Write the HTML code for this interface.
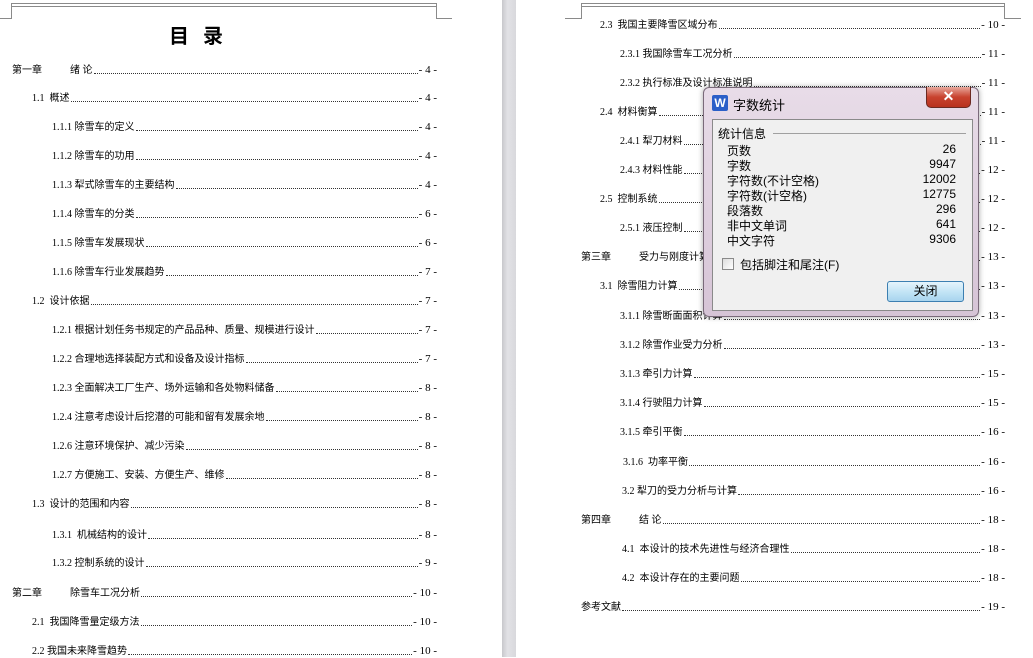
<!DOCTYPE html>
<html><head><meta charset="utf-8">
<style>
*{margin:0;padding:0;box-sizing:border-box}
body{width:1033px;height:657px;overflow:hidden;background:#fff;position:relative;font-family:"Liberation Serif","Noto Sans CJK SC",serif;color:#000}
.gut{position:absolute;left:502px;top:0;width:14px;height:657px;background:linear-gradient(90deg,#c8c8cc,#e2e2e6 40%,#d8d8dc)}
.ln{position:absolute;background:#8a8a8a}
.r{position:absolute;display:flex;align-items:flex-end;font-size:10px;height:13px;line-height:13px;white-space:nowrap}
.r .t{font-family:"Liberation Serif","Noto Sans CJK SC",serif}
.r .d{flex:1;border-bottom:1px dotted #333;margin:0 1px 3px 1px}
.r .p{font-family:"Liberation Serif",serif;font-size:11px}
.sp{display:inline-block}
#dlg{position:absolute;left:703px;top:87px;width:276px;height:230px;border:1px solid #7a6a7a;border-radius:6px;background:linear-gradient(180deg,#e8dce8,#d6c4d6);box-shadow:0 0 6px rgba(0,0,0,.35)}
#dlg .in{position:absolute;left:8px;top:31px;width:261px;height:192px;background:#f0f0f0;border:1px solid #8a8a8a}
#dlg .f{font-family:"Liberation Sans","Noto Sans CJK SC",sans-serif;font-size:12px;position:absolute;white-space:nowrap}
</style></head><body>
<div class="gut"></div>
<div class="ln" style="left:11px;top:3px;width:426px;height:1px"></div>
<div class="ln" style="left:11px;top:6px;width:426px;height:1px"></div>
<div class="ln" style="left:11px;top:3px;width:1px;height:16px"></div>
<div class="ln" style="left:0;top:18px;width:12px;height:1px"></div>
<div class="ln" style="left:436px;top:3px;width:1px;height:16px"></div>
<div class="ln" style="left:436px;top:18px;width:16px;height:1px"></div>
<div class="ln" style="left:581px;top:3px;width:424px;height:1px"></div>
<div class="ln" style="left:581px;top:6px;width:424px;height:1px"></div>
<div class="ln" style="left:581px;top:3px;width:1px;height:16px"></div>
<div class="ln" style="left:565px;top:18px;width:17px;height:1px"></div>
<div class="ln" style="left:1004px;top:3px;width:1px;height:16px"></div>
<div class="ln" style="left:1004px;top:18px;width:17px;height:1px"></div>

<div style="position:absolute;left:169px;top:20px;font-size:20px;font-weight:bold;font-family:'Noto Sans CJK SC',sans-serif;letter-spacing:14px">目录</div>

<div class="r" style="left:12px;width:425px;top:64px"><span class="t">第一章<span class="sp" style="width:28px"></span>绪&nbsp;论</span><span class="d"></span><span class="p">- 4 -</span></div>
<div class="r" style="left:32px;width:405px;top:92px"><span class="t">1.1 &nbsp;概述</span><span class="d"></span><span class="p">- 4 -</span></div>
<div class="r" style="left:52px;width:385px;top:121px"><span class="t">1.1.1 除雪车的定义</span><span class="d"></span><span class="p">- 4 -</span></div>
<div class="r" style="left:52px;width:385px;top:150px"><span class="t">1.1.2 除雪车的功用</span><span class="d"></span><span class="p">- 4 -</span></div>
<div class="r" style="left:52px;width:385px;top:179px"><span class="t">1.1.3 犁式除雪车的主要结构</span><span class="d"></span><span class="p">- 4 -</span></div>
<div class="r" style="left:52px;width:385px;top:208px"><span class="t">1.1.4 除雪车的分类</span><span class="d"></span><span class="p">- 6 -</span></div>
<div class="r" style="left:52px;width:385px;top:237px"><span class="t">1.1.5 除雪车发展现状</span><span class="d"></span><span class="p">- 6 -</span></div>
<div class="r" style="left:52px;width:385px;top:266px"><span class="t">1.1.6 除雪车行业发展趋势</span><span class="d"></span><span class="p">- 7 -</span></div>
<div class="r" style="left:32px;width:405px;top:295px"><span class="t">1.2 &nbsp;设计依据</span><span class="d"></span><span class="p">- 7 -</span></div>
<div class="r" style="left:52px;width:385px;top:324px"><span class="t">1.2.1 根据计划任务书规定的产品品种、质量、规模进行设计</span><span class="d"></span><span class="p">- 7 -</span></div>
<div class="r" style="left:52px;width:385px;top:353px"><span class="t">1.2.2 合理地选择装配方式和设备及设计指标</span><span class="d"></span><span class="p">- 7 -</span></div>
<div class="r" style="left:52px;width:385px;top:382px"><span class="t">1.2.3 全面解决工厂生产、场外运输和各处物料储备</span><span class="d"></span><span class="p">- 8 -</span></div>
<div class="r" style="left:52px;width:385px;top:411px"><span class="t">1.2.4 注意考虑设计后挖潜的可能和留有发展余地</span><span class="d"></span><span class="p">- 8 -</span></div>
<div class="r" style="left:52px;width:385px;top:440px"><span class="t">1.2.6 注意环境保护、减少污染</span><span class="d"></span><span class="p">- 8 -</span></div>
<div class="r" style="left:52px;width:385px;top:469px"><span class="t">1.2.7 方便施工、安装、方便生产、维修</span><span class="d"></span><span class="p">- 8 -</span></div>
<div class="r" style="left:32px;width:405px;top:498px"><span class="t">1.3 &nbsp;设计的范围和内容</span><span class="d"></span><span class="p">- 8 -</span></div>
<div class="r" style="left:52px;width:385px;top:529px"><span class="t">1.3.1 &nbsp;机械结构的设计</span><span class="d"></span><span class="p">- 8 -</span></div>
<div class="r" style="left:52px;width:385px;top:557px"><span class="t">1.3.2 控制系统的设计</span><span class="d"></span><span class="p">- 9 -</span></div>
<div class="r" style="left:12px;width:425px;top:587px"><span class="t">第二章<span class="sp" style="width:28px"></span>除雪车工况分析</span><span class="d"></span><span class="p">- 10 -</span></div>
<div class="r" style="left:32px;width:405px;top:616px"><span class="t">2.1 &nbsp;我国降雪量定级方法</span><span class="d"></span><span class="p">- 10 -</span></div>
<div class="r" style="left:32px;width:405px;top:645px"><span class="t">2.2 我国未来降雪趋势</span><span class="d"></span><span class="p">- 10 -</span></div>

<div class="r" style="left:600px;width:405px;top:19px"><span class="t">2.3 &nbsp;我国主要降雪区域分布</span><span class="d"></span><span class="p">- 10 -</span></div>
<div class="r" style="left:620px;width:385px;top:48px"><span class="t">2.3.1 我国除雪车工况分析</span><span class="d"></span><span class="p">- 11 -</span></div>
<div class="r" style="left:620px;width:385px;top:77px"><span class="t">2.3.2 执行标准及设计标准说明</span><span class="d"></span><span class="p">- 11 -</span></div>
<div class="r" style="left:600px;width:405px;top:106px"><span class="t">2.4 &nbsp;材料衡算</span><span class="d"></span><span class="p">- 11 -</span></div>
<div class="r" style="left:620px;width:385px;top:135px"><span class="t">2.4.1 犁刀材料</span><span class="d"></span><span class="p">- 11 -</span></div>
<div class="r" style="left:620px;width:385px;top:164px"><span class="t">2.4.3 材料性能</span><span class="d"></span><span class="p">- 12 -</span></div>
<div class="r" style="left:600px;width:405px;top:193px"><span class="t">2.5 &nbsp;控制系统</span><span class="d"></span><span class="p">- 12 -</span></div>
<div class="r" style="left:620px;width:385px;top:222px"><span class="t">2.5.1 液压控制</span><span class="d"></span><span class="p">- 12 -</span></div>
<div class="r" style="left:581px;width:424px;top:251px"><span class="t">第三章<span class="sp" style="width:28px"></span>受力与刚度计算</span><span class="d"></span><span class="p">- 13 -</span></div>
<div class="r" style="left:600px;width:405px;top:280px"><span class="t">3.1 &nbsp;除雪阻力计算</span><span class="d"></span><span class="p">- 13 -</span></div>
<div class="r" style="left:620px;width:385px;top:310px"><span class="t">3.1.1 除雪断面面积计算</span><span class="d"></span><span class="p">- 13 -</span></div>
<div class="r" style="left:620px;width:385px;top:339px"><span class="t">3.1.2 除雪作业受力分析</span><span class="d"></span><span class="p">- 13 -</span></div>
<div class="r" style="left:620px;width:385px;top:368px"><span class="t">3.1.3 牵引力计算</span><span class="d"></span><span class="p">- 15 -</span></div>
<div class="r" style="left:620px;width:385px;top:397px"><span class="t">3.1.4 行驶阻力计算</span><span class="d"></span><span class="p">- 15 -</span></div>
<div class="r" style="left:620px;width:385px;top:426px"><span class="t">3.1.5 牵引平衡</span><span class="d"></span><span class="p">- 16 -</span></div>
<div class="r" style="left:623px;width:382px;top:456px"><span class="t">3.1.6 &nbsp;功率平衡</span><span class="d"></span><span class="p">- 16 -</span></div>
<div class="r" style="left:622px;width:383px;top:485px"><span class="t">3.2 犁刀的受力分析与计算</span><span class="d"></span><span class="p">- 16 -</span></div>
<div class="r" style="left:581px;width:424px;top:514px"><span class="t">第四章<span class="sp" style="width:28px"></span>结&nbsp;论</span><span class="d"></span><span class="p">- 18 -</span></div>
<div class="r" style="left:622px;width:383px;top:543px"><span class="t">4.1 &nbsp;本设计的技术先进性与经济合理性</span><span class="d"></span><span class="p">- 18 -</span></div>
<div class="r" style="left:622px;width:383px;top:572px"><span class="t">4.2 &nbsp;本设计存在的主要问题</span><span class="d"></span><span class="p">- 18 -</span></div>
<div class="r" style="left:581px;width:424px;top:601px"><span class="t">参考文献</span><span class="d"></span><span class="p">- 19 -</span></div>

<div id="dlg">
  <div style="position:absolute;left:8px;top:7px;width:16px;height:16px;background:#2b5fc8;border-radius:2px;color:#fff;font:bold 12px 'Liberation Sans',sans-serif;text-align:center;line-height:16px">W</div>
  <div class="f" style="left:29px;top:7px;font-size:13px">字数统计</div>
  <div style="position:absolute;left:222px;top:-1px;width:45px;height:21px;border:1px solid #6b2a22;border-top:none;border-radius:0 0 5px 5px;background:linear-gradient(180deg,#e8a89c,#c8432f 50%,#b8321e);color:#fff;font:bold 14px 'Liberation Sans',sans-serif;text-align:center;line-height:19px">✕</div>
  <div class="in">
    <div class="f" style="left:5px;top:5px">统计信息</div>
    <div style="position:absolute;left:60px;top:13px;width:193px;height:1px;background:#a0a0a0"></div>
    <div class="f" style="left:14px;top:22px">页数</div><div class="f" style="right:16px;top:22px">26</div>
    <div class="f" style="left:14px;top:37px">字数</div><div class="f" style="right:16px;top:37px">9947</div>
    <div class="f" style="left:14px;top:52px">字符数(不计空格)</div><div class="f" style="right:16px;top:52px">12002</div>
    <div class="f" style="left:14px;top:67px">字符数(计空格)</div><div class="f" style="right:16px;top:67px">12775</div>
    <div class="f" style="left:14px;top:82px">段落数</div><div class="f" style="right:16px;top:82px">296</div>
    <div class="f" style="left:14px;top:97px">非中文单词</div><div class="f" style="right:16px;top:97px">641</div>
    <div class="f" style="left:14px;top:112px">中文字符</div><div class="f" style="right:16px;top:112px">9306</div>
    <div style="position:absolute;left:9px;top:138px;width:12px;height:12px;border:1px solid #8a8a8a;background:linear-gradient(135deg,#ddd,#fff)"></div>
    <div class="f" style="left:27px;top:136px">包括脚注和尾注(F)</div>
    <div style="position:absolute;left:174px;top:161px;width:77px;height:21px;border:1px solid #3c7fb1;border-radius:3px;background:linear-gradient(180deg,#e5f4fc,#c4e5f6 50%,#a8d4ee);font:12px 'Liberation Sans','Noto Sans CJK SC',sans-serif;text-align:center;line-height:19px">关闭</div>
  </div>
</div>
</body></html>
